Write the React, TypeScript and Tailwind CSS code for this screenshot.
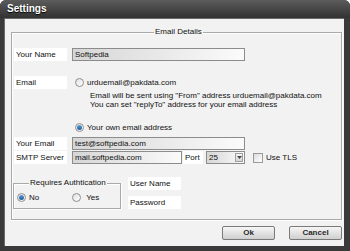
import React from "react";

function Radio({ checked }: { checked?: boolean }) {
  return (
    <span className="relative inline-flex h-[9px] w-[9px] shrink-0 items-center justify-center rounded-full border border-[#8f8f8f] bg-gradient-to-br from-[#e0e0e0] to-[#ffffff]">
      {checked && <span className="h-[5px] w-[5px] rounded-full bg-gradient-to-b from-[#5aa0d8] to-[#1a5a98]" />}
    </span>
  );
}

function Label({ children, w = "w-[53px]" }: { children: React.ReactNode; w?: string }) {
  return (
    <div className={`flex h-[13px] ${w} shrink-0 items-center bg-white pl-[2px] text-[#111]`}>{children}</div>
  );
}

function Input({ value, w }: { value: string; w: string }) {
  return (
    <div className={`flex h-[13px] ${w} shrink-0 items-center border border-[#8c8c8c] bg-gradient-to-r from-[#d6d6d6] to-[#fbfbfb] pl-[2px] text-[#111]`}>
      {value}
    </div>
  );
}

export default function App() {
  return (
    <div className="h-[251px] w-[350px] overflow-hidden bg-white font-['Liberation_Sans',Arial,sans-serif] text-[8px] leading-none">
      <div className="flex h-[251px] w-[350px] flex-col rounded-t-[6px] bg-[#3a3a3a]">
        <div className="flex h-[18px] shrink-0 items-center rounded-t-[6px] bg-gradient-to-b from-[#5c5c5c] to-[#323232] pl-[7px] text-[10px] font-bold text-white [text-shadow:0_1px_1px_#000]">
          Settings
        </div>
        <div className="ml-[4px] mr-[6px] mb-[5px] flex flex-1 flex-col border-l border-t border-[#6a6a6a] bg-[#f2f2f2] pl-[6px] pr-[2px] pt-[13px]">
          {/* Email Details group */}
          <div className="relative flex h-[188px] flex-col border border-[#a9a9a9] shadow-[1px_1px_0_#ffffff,inset_1px_1px_0_#ffffff]">
            <div className="absolute left-[142px] top-[-5px] bg-[#f2f2f2] px-[1px] text-[#111]">Email Details</div>
            <div className="ml-[2px] mt-[15px] flex items-center gap-[5px]">
              <Label>Your Name</Label>
              <Input value="Softpedia" w="w-[173px]" />
            </div>
            <div className="ml-[2px] mt-[15px] flex items-center">
              <Label>Email</Label>
              <div className="ml-[8px] flex items-center gap-[3px] text-[#111]">
                <Radio />
                <span>urduemail@pakdata.com</span>
              </div>
            </div>
            <div className="ml-[78px] mt-[3px] flex flex-col leading-[8.5px] text-[#111]">
              <span>Email will be sent using "From" address urduemail@pakdata.com</span>
              <span>You can set "replyTo" address for your email address</span>
            </div>
            <div className="ml-[63px] mt-[14px] flex items-center gap-[3px] text-[#111]">
              <Radio checked />
              <span>Your own email address</span>
            </div>
            <div className="ml-[2px] mt-[5px] flex items-center gap-[5px]">
              <Label>Your Email</Label>
              <Input value="test@softpedia.com" w="w-[173px]" />
            </div>
            <div className="ml-[2px] mt-[1px] flex items-center">
              <Label>SMTP Server</Label>
              <div className="ml-[5px]">
                <Input value="mail.softpedia.com" w="w-[110px]" />
              </div>
              <div className="ml-[1px]">
                <Label w="w-[20px]">Port</Label>
              </div>
              <div className="ml-[3px] flex h-[13px] w-[39px] items-center justify-between border border-[#8c8c8c] bg-gradient-to-r from-[#d6d6d6] to-[#fbfbfb] pl-[2px] pr-[1px] text-[#111]">
                <span>25</span>
                <span className="flex h-[9px] w-[8px] items-center justify-center border border-[#a0a0a0] bg-gradient-to-b from-[#f4f4f4] to-[#d4d4d4]">
                  <svg width="5" height="3" viewBox="0 0 5 3"><path d="M0 0h5L2.5 3z" fill="#444" /></svg>
                </span>
              </div>
              <div className="ml-[8px] flex items-center gap-[3px] text-[#111]">
                <span className="h-[10px] w-[10px] border border-[#9a9a9a] bg-gradient-to-br from-[#dcdcdc] to-[#ffffff]" />
                <span>Use TLS</span>
              </div>
            </div>
            <div className="ml-[1px] mt-[13px] flex items-start">
              <div className="relative mt-[6px] flex h-[26px] w-[108px] items-center border border-[#a9a9a9] shadow-[1px_1px_0_#ffffff,inset_1px_1px_0_#ffffff]">
                <div className="absolute left-[15px] top-[-5px] bg-[#f2f2f2] px-[1px] text-[#111]">Requires Authtication</div>
                <div className="ml-[3px] mt-[3px] flex items-center gap-[3px] text-[#111]">
                  <Radio checked />
                  <span>No</span>
                </div>
                <div className="ml-[33px] mt-[3px] flex items-center gap-[5px] text-[#111]">
                  <Radio />
                  <span>Yes</span>
                </div>
              </div>
              <div className="ml-[7px] flex flex-col gap-[6px]">
                <Label>User Name</Label>
                <div className="h-[14px]">
                  <Label>Password</Label>
                </div>
              </div>
            </div>
          </div>
          <div className="mt-[6px] flex justify-end gap-[14px]">
            <button className="flex h-[14px] w-[53px] items-center justify-center rounded-[2px] border border-[#7a7a7a] bg-gradient-to-b from-[#f6f6f6] to-[#cfcfcf] text-[8px] font-bold text-[#2a2a2a]">
              Ok
            </button>
            <button className="flex h-[14px] w-[53px] items-center justify-center rounded-[2px] border border-[#7a7a7a] bg-gradient-to-b from-[#f6f6f6] to-[#cfcfcf] text-[8px] font-bold text-[#2a2a2a]">
              Cancel
            </button>
          </div>
        </div>
      </div>
    </div>
  );
}
